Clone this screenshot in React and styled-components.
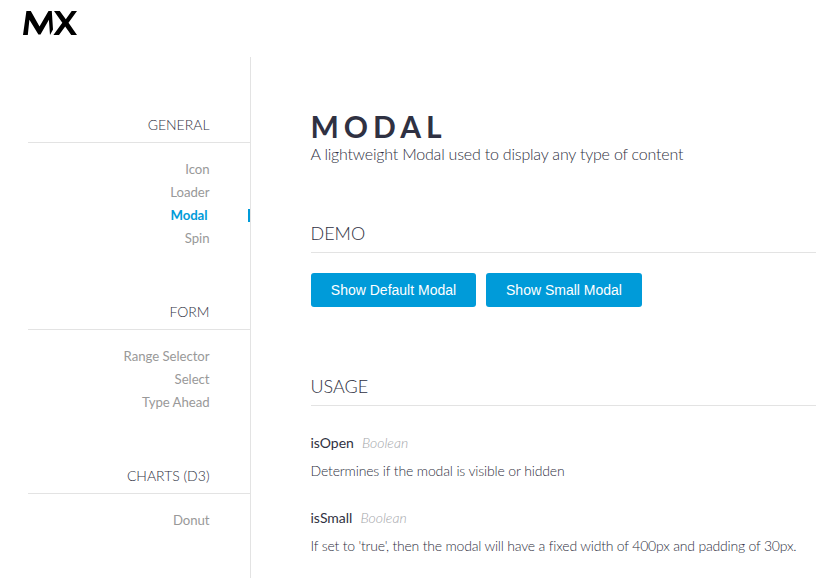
import React from 'react';
import styled, { createGlobalStyle } from 'styled-components';

const Global = createGlobalStyle`
  * { box-sizing: border-box; }
  body { margin: 0; background: #fff; overflow: hidden; font-family: Lato, sans-serif; color: #2f3142; -webkit-font-smoothing: antialiased; }
  h1, h2, h3, p, ul { margin: 0; padding: 0; }
`;

const Page = styled.div`
  height: 578px;
  display: flex;
  flex-direction: column;
`;

const Header = styled.header`
  height: 57px;
  flex: none;
  padding: 11px 0 0 23px;
`;

const Logo = styled.svg`
  display: block;
  width: 54px;
  height: 24px;
`;

const Body = styled.div`
  flex: 1;
  display: flex;
  min-height: 0;
`;

const Sidebar = styled.nav`
  width: 251px;
  flex: none;
  padding: 57px 0 0 28px;
  border-right: 1px solid #e3e3e3;
`;

const Group = styled.section`
  text-align: right;
  margin-bottom: 51px;
`;

const GroupTitle = styled.h3`
  height: 29px;
  line-height: 22px;
  padding-right: 40.5px;
  border-bottom: 1px solid #e3e3e3;
  font-size: 14px;
  font-weight: 300;
`;

const Links = styled.ul`
  list-style: none;
  padding-top: 15px;
`;

const Link = styled.li`
  height: 23px;
  line-height: 23px;
  font-size: 13.2px;
  letter-spacing: -0.05px;
  display: flex;
  justify-content: flex-end;
  align-items: center;
  padding-right: ${(p) => (p.$active ? 0 : 40.5)}px;
  color: ${(p) => (p.$active ? '#009bd9' : '#999')};
  font-weight: ${(p) => (p.$active ? 700 : 400)};
`;

const ActiveMark = styled.span`
  width: 2px;
  height: 13px;
  margin-left: 40.5px;
  background: #009bd9;
`;

const Main = styled.main`
  flex: 1;
  padding-left: 60px;
  min-width: 0;
`;

const Title = styled.h1`
  margin-top: 51px;
  height: 36px;
  line-height: 36px;
  font-size: 30px;
  font-weight: 700;
  letter-spacing: 5px;
  text-indent: -0.5px;
`;

const Subtitle = styled.p`
  height: 20px;
  line-height: 20px;
  font-size: 16px;
  letter-spacing: -0.2px;
  font-weight: 300;
  text-indent: -0.5px;
`;

const SectionTitle = styled.h2`
  margin-top: ${(p) => p.$gap}px;
  height: 33px;
  line-height: 26px;
  border-bottom: 1px solid #e3e3e3;
  font-size: 18px;
  font-weight: 300;
  text-indent: -0.5px;
`;

const Buttons = styled.div`
  display: flex;
  gap: 10px;
  padding-top: 20px;
`;

const Button = styled.button`
  width: ${(p) => p.$width}px;
  height: 34px;
  padding: 0;
  border: 0;
  border-radius: 3px;
  background: #009bd9;
  color: #fff;
  font: 14px 'Liberation Sans', Arial, sans-serif;
`;

const Prop = styled.article`
  padding-top: 27px;
  height: 75px;
  text-indent: -0.5px;
`;

const PropName = styled.h3`
  height: 20px;
  line-height: 20px;
  font-size: 14px;
  font-weight: 400;
`;

const PropType = styled.span`
  margin-left: 8px;
  color: #a4a6aa;
  font-weight: 300;
  font-style: italic;
`;

const PropText = styled.p`
  margin-top: 8px;
  height: 20px;
  line-height: 20px;
  font-size: 14px;
  letter-spacing: ${(p) => p.$tracking}px;
  font-weight: 300;
  white-space: nowrap;
`;

const groups = [
  { title: 'GENERAL', links: ['Icon', 'Loader', 'Modal', 'Spin'] },
  { title: 'FORM', links: ['Range Selector', 'Select', 'Type Ahead'] },
  { title: 'CHARTS (D3)', links: ['Donut'] },
];

const properties = [
  { name: 'isOpen', tracking: -0.15, text: 'Determines if the modal is visible or hidden' },
  { name: 'isSmall', tracking: -0.2, text: "If set to 'true', then the modal will have a fixed width of 400px and padding of 30px." },
];

export default function App() {
  return (
    <Page>
      <Global />
      <Header>
        <Logo viewBox="0 0 54 24" aria-label="MX">
          <path d="M0 24 3.4 0h4.4l8.7 15.5L25.5 0h3.3l1.2 18.5-3 5.5L25.9 8.8 17.5 23.5h-2.1L6.4 8.8 4.8 24z" />
          <path d="M31 0h5.8l6 8.2L48.7 0H54l-8.5 11.8L54 24h-5.8l-6-8.4L36 24h-5.6l8.9-12.2z" />
        </Logo>
      </Header>
      <Body>
        <Sidebar>
          {groups.map((g) => (
            <Group key={g.title}>
              <GroupTitle>{g.title}</GroupTitle>
              <Links>
                {g.links.map((l) => (
                  <Link key={l} $active={l === 'Modal'}>
                    {l}
                    {l === 'Modal' && <ActiveMark />}
                  </Link>
                ))}
              </Links>
            </Group>
          ))}
        </Sidebar>
        <Main>
          <Title>MODAL</Title>
          <Subtitle>A lightweight Modal used to display any type of content</Subtitle>
          <SectionTitle $gap={56}>DEMO</SectionTitle>
          <Buttons>
            <Button $width={165}>Show Default Modal</Button>
            <Button $width={156}>Show Small Modal</Button>
          </Buttons>
          <SectionTitle $gap={66}>USAGE</SectionTitle>
          {properties.map((p) => (
            <Prop key={p.name}>
              <PropName>{p.name}<PropType>Boolean</PropType></PropName>
              <PropText $tracking={p.tracking}>{p.text}</PropText>
            </Prop>
          ))}
        </Main>
      </Body>
    </Page>
  );
}
